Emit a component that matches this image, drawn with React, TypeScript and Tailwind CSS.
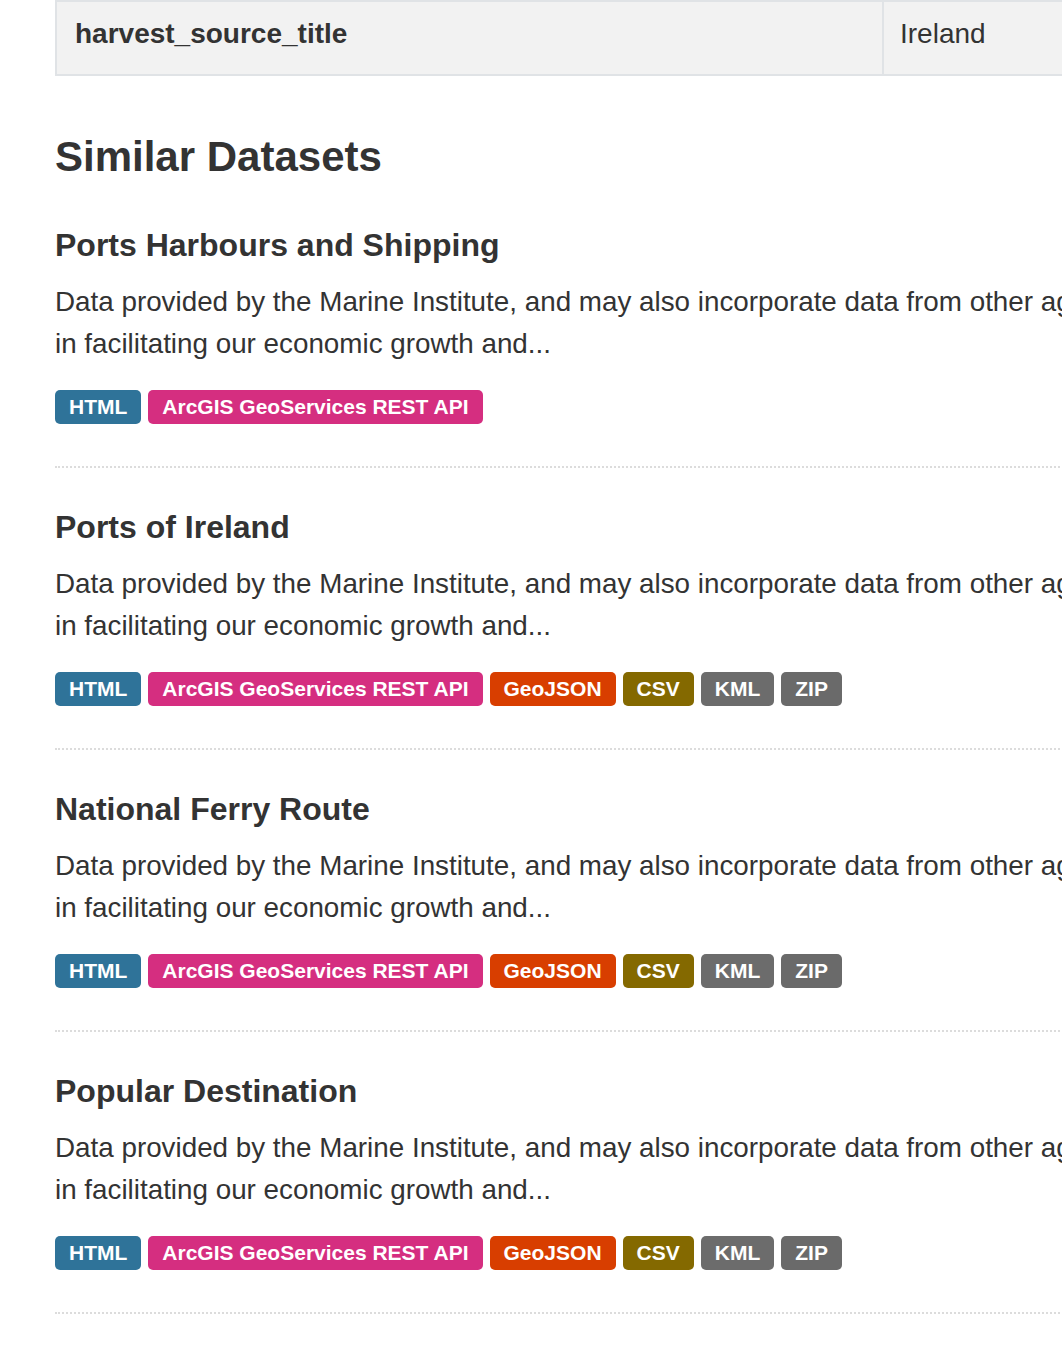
import React from 'react';

type Format = { label: string; color: string };

const FORMATS: Record<string, Format> = {
  HTML: { label: 'HTML', color: 'bg-[#2f7399]' },
  ARCGIS: { label: 'ArcGIS GeoServices REST API', color: 'bg-[#d52e80]' },
  GEOJSON: { label: 'GeoJSON', color: 'bg-[#d83e00]' },
  CSV: { label: 'CSV', color: 'bg-[#846900]' },
  KML: { label: 'KML', color: 'bg-[#6c6c6c]' },
  ZIP: { label: 'ZIP', color: 'bg-[#6a6a6a]' },
};

const ALL = ['HTML', 'ARCGIS', 'GEOJSON', 'CSV', 'KML', 'ZIP'];

const datasets = [
  { title: 'Ports Harbours and Shipping', formats: ['HTML', 'ARCGIS'] },
  { title: 'Ports of Ireland', formats: ALL },
  { title: 'National Ferry Route', formats: ALL },
  { title: 'Popular Destination', formats: ALL },
];

const Badge: React.FC<{ id: string }> = ({ id }) => {
  const f = FORMATS[id];
  return (
    <span
      className={`${f.color} inline-flex items-center h-[34px] px-[14px] rounded-[5px] text-white text-[21px] font-bold font-['Liberation_Sans',sans-serif]`}
    >
      {f.label}
    </span>
  );
};

export default function App() {
  return (
    <div className="w-[1062px] min-h-[1348px] overflow-hidden bg-white text-[#333] font-['Liberation_Sans',sans-serif]">
      <div className="w-[1300px] pl-[55px]">
        <table className="w-[1245px] border-collapse">
          <tbody>
            <tr className="bg-[#f2f2f2]">
              <th className="w-[827px] text-left align-top border-2 border-[#e0e3e6] pl-[18px] pt-[11px] pb-[19px] text-[28px] leading-[42px] font-bold">
                harvest_source_title
              </th>
              <td className="align-top border-2 border-[#e0e3e6] pl-[16px] pt-[11px] pb-[19px] text-[28px] leading-[42px]">
                Ireland
              </td>
            </tr>
          </tbody>
        </table>

        <h2 className="mt-[58px] text-[42px] leading-[46px] font-bold">
          Similar Datasets
        </h2>

        <ul className="mt-[48px]">
          {datasets.map((d, i) => (
            <li
              key={d.title}
              className={`border-b-2 border-dotted border-[#dcdcdc] pb-[42px] ${i > 0 ? 'pt-[42px]' : ''}`}
            >
              <h3 className="text-[32px] leading-[35px] font-bold">
                {d.title}
              </h3>
              <div className="mt-[18px] text-[27.8px] leading-[42px] whitespace-nowrap">
                <div>Data provided by the Marine Institute, and may also incorporate data from other agencies. Shipping plays a vital role</div>
                <div>in facilitating our economic growth and...</div>
              </div>
              <div className="mt-[25px] flex gap-[7px]">
                {d.formats.map(f => (
                  <Badge key={f} id={f} />
                ))}
              </div>
            </li>
          ))}
        </ul>
      </div>
    </div>
  );
}
